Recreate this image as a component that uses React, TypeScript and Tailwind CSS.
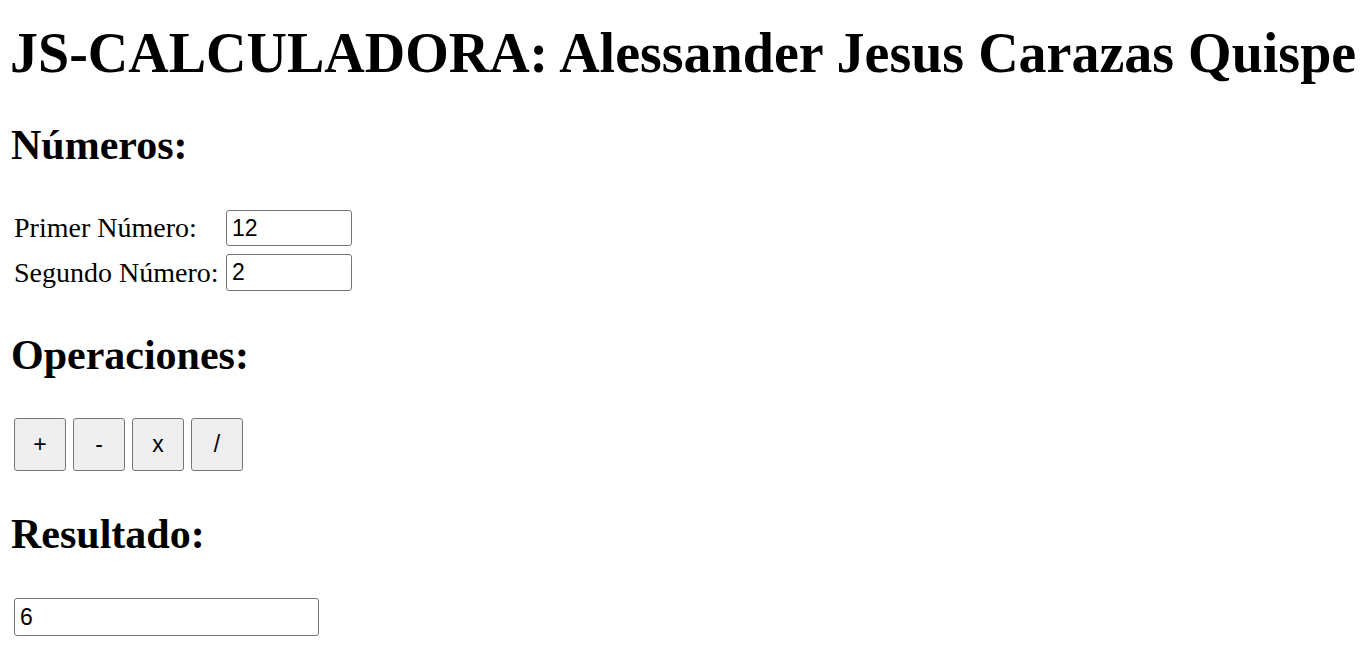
import React, { useState } from "react";

export default function App() {
  const [a, setA] = useState("12");
  const [b, setB] = useState("2");
  const [result, setResult] = useState("6");

  const calc = (op: string) => {
    const x = parseFloat(a);
    const y = parseFloat(b);
    let r = 0;
    if (op === "+") r = x + y;
    else if (op === "-") r = x - y;
    else if (op === "x") r = x * y;
    else r = x / y;
    setResult(String(r));
  };

  const inputCls =
    "h-[36px] border border-[#767676] rounded-[3px] px-[5px] text-[23px] text-black bg-white outline-none font-['Liberation_Sans',Arial,sans-serif]";

  return (
    <div className="min-h-screen bg-white text-black px-3 font-['Liberation_Serif','Times_New_Roman',serif]">
      <h1 className="pt-[22px] text-[56px] font-bold leading-[62px] whitespace-nowrap -ml-[2px]">
        JS-CALCULADORA: Alessander Jesus Carazas Quispe
      </h1>

      <h2 className="mt-[38px] text-[42px] font-bold leading-[46px] -ml-[1px]">Números:</h2>

      <div className="mt-[42px] ml-[2px] grid grid-cols-[209px_auto] justify-start items-center gap-x-[3px] gap-y-[8px] text-[28px] leading-[36px]">
        <label className="whitespace-nowrap">Primer Número:</label>
        <input className={`${inputCls} w-[126px]`} value={a} onChange={(e) => setA(e.target.value)} />
        <label className="whitespace-nowrap">Segundo Número:</label>
        <input className={`${inputCls} w-[126px] h-[37px]`} value={b} onChange={(e) => setB(e.target.value)} />
      </div>

      <h2 className="mt-[41px] text-[42px] font-bold leading-[46px] -ml-[1px]">Operaciones:</h2>

      <div className="mt-[40px] ml-[2px] flex gap-[7px]">
        {["+", "-", "x", "/"].map((op) => (
          <button
            key={op}
            onClick={() => calc(op)}
            className="w-[52px] h-[53px] bg-[#efefef] border border-[#767676] rounded-[3px] text-[23px] text-black font-['Liberation_Sans',Arial,sans-serif]"
          >
            {op}
          </button>
        ))}
      </div>

      <h2 className="mt-[40px] text-[42px] font-bold leading-[46px] -ml-[1px]">Resultado:</h2>

      <div className="mt-[41px] ml-[2px]">
        <input className={`${inputCls} w-[305px] h-[38px]`} value={result} readOnly />
      </div>
    </div>
  );
}
